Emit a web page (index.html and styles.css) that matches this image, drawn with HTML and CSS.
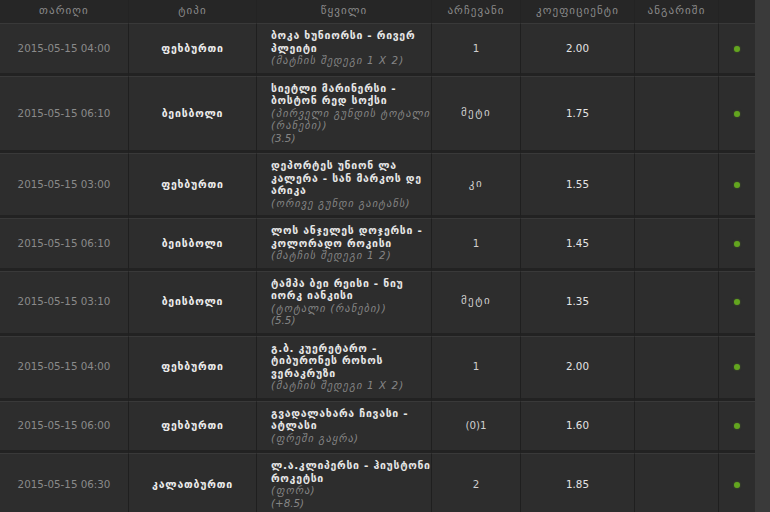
FILE: index.html
```html
<!DOCTYPE html>
<html lang="ka">
<head>
    <meta charset="UTF-8">
    <meta name="viewport" content="width=device-width, initial-scale=1.0">
    <title>ფსონების ისტორია</title>
    <link rel="stylesheet" href="styles.css">
</head>
<body>
    <table class="bets">
        <thead>
            <tr>
                <th class="col-date">თარიღი</th>
                <th class="col-type">ტიპი</th>
                <th class="col-event">წყვილი</th>
                <th class="col-pick">არჩევანი</th>
                <th class="col-odds">კოეფიციენტი</th>
                <th class="col-score">ანგარიში</th>
                <th class="col-status"></th>
            </tr>
        </thead>
        <tbody>
            <tr>
                <td class="date">2015-05-15 04:00</td>
                <td class="type">ფეხბურთი</td>
                <td class="event">
                    <div class="teams">ბოკა ხუნიორსი - რივერ პლეიტი</div>
                    <div class="market">(მატჩის შედეგი 1 X 2)</div>
                </td>
                <td class="pick">1</td>
                <td class="odds">2.00</td>
                <td class="score"></td>
                <td class="status"><span class="dot"></span></td>
            </tr>
            <tr>
                <td class="date">2015-05-15 06:10</td>
                <td class="type">ბეისბოლი</td>
                <td class="event">
                    <div class="teams">სიეტლი მარინერსი - ბოსტონ რედ სოქსი</div>
                    <div class="market">(პირველი გუნდის ტოტალი (რანები))</div>
                    <div class="market line">(3.5)</div>
                </td>
                <td class="pick ka">მეტი</td>
                <td class="odds">1.75</td>
                <td class="score"></td>
                <td class="status"><span class="dot"></span></td>
            </tr>
            <tr>
                <td class="date">2015-05-15 03:00</td>
                <td class="type">ფეხბურთი</td>
                <td class="event">
                    <div class="teams">დეპორტეს უნიონ ლა კალერა - სან მარკოს დე არიკა</div>
                    <div class="market">(ორივე გუნდი გაიტანს)</div>
                </td>
                <td class="pick ka">კი</td>
                <td class="odds">1.55</td>
                <td class="score"></td>
                <td class="status"><span class="dot"></span></td>
            </tr>
            <tr>
                <td class="date">2015-05-15 06:10</td>
                <td class="type">ბეისბოლი</td>
                <td class="event">
                    <div class="teams">ლოს ანჯელეს დოჯერსი - კოლორადო როკისი</div>
                    <div class="market">(მატჩის შედეგი 1 2)</div>
                </td>
                <td class="pick">1</td>
                <td class="odds">1.45</td>
                <td class="score"></td>
                <td class="status"><span class="dot"></span></td>
            </tr>
            <tr>
                <td class="date">2015-05-15 03:10</td>
                <td class="type">ბეისბოლი</td>
                <td class="event">
                    <div class="teams">ტამპა ბეი რეისი - ნიუ იორკ იანკისი</div>
                    <div class="market">(ტოტალი (რანები))</div>
                    <div class="market line">(5.5)</div>
                </td>
                <td class="pick ka">მეტი</td>
                <td class="odds">1.35</td>
                <td class="score"></td>
                <td class="status"><span class="dot"></span></td>
            </tr>
            <tr>
                <td class="date">2015-05-15 04:00</td>
                <td class="type">ფეხბურთი</td>
                <td class="event">
                    <div class="teams">გ.ბ. კუერეტარო - ტიბურონეს როხოს ვერაკრუზი</div>
                    <div class="market">(მატჩის შედეგი 1 X 2)</div>
                </td>
                <td class="pick">1</td>
                <td class="odds">2.00</td>
                <td class="score"></td>
                <td class="status"><span class="dot"></span></td>
            </tr>
            <tr>
                <td class="date">2015-05-15 06:00</td>
                <td class="type">ფეხბურთი</td>
                <td class="event">
                    <div class="teams">გვადალახარა ჩივასი - ატლასი</div>
                    <div class="market">(ფრეში გაყრა)</div>
                </td>
                <td class="pick">(0)1</td>
                <td class="odds">1.60</td>
                <td class="score"></td>
                <td class="status"><span class="dot"></span></td>
            </tr>
            <tr>
                <td class="date">2015-05-15 06:30</td>
                <td class="type">კალათბურთი</td>
                <td class="event">
                    <div class="teams">ლ.ა.კლიპერსი - ჰიუსტონი როკეტსი</div>
                    <div class="market">(ფორა)</div>
                    <div class="market line">(+8.5)</div>
                </td>
                <td class="pick">2</td>
                <td class="odds">1.85</td>
                <td class="score"></td>
                <td class="status"><span class="dot"></span></td>
            </tr>
        </tbody>
    </table>
</body>
</html>
```

FILE: styles.css
```css
body {
    margin: 0;
    background: #3a3a3a;
    font-family: 'DejaVu Sans', 'Noto Sans', sans-serif;
    font-size: 10.3px;
    line-height: 12.5px;
    color: #ddd;
    overflow: hidden;
}
.bets {
    width: 755px;
    border-collapse: separate;
    border-spacing: 0;
    table-layout: fixed;
    background: #2d2d2d;
}
.bets th {
    height: 23px;
    padding: 0;
    background: #262626;
    color: #8a8a8a;
    font-size: 11px;
    font-weight: normal;
    letter-spacing: 1.1px;
    text-align: center;
    border-right: 1px solid #232323;
}
.col-date { width: 128px; }
.col-type { width: 127px; }
.col-event { width: 174px; }
.col-pick { width: 88px; }
.col-odds { width: 113px; }
.col-score { width: 83px; }
.col-status { width: 36px; }
.bets td {
    padding: 5px 0 6px;
    text-align: center;
    vertical-align: middle;
    border-top: 1px solid #393939;
    border-bottom: 3px solid #222;
    border-right: 1px solid #1f1f1f;
}
.bets th:last-child,
.bets td:last-child {
    border-right: none;
}
.date {
    color: #8a8a8a;
}
.type {
    color: #ececec;
    font-size: 10.5px;
    font-weight: bold;
    letter-spacing: 0.8px;
}
.bets td.event {
    text-align: left;
    padding-left: 14px;
    padding-right: 0;
}
.teams {
    color: #e6e6e6;
    font-size: 10.5px;
    font-weight: bold;
    letter-spacing: 0.7px;
}
.market {
    color: #858585;
    font-style: italic;
    letter-spacing: 1.1px;
}
.market.line {
    letter-spacing: 0;
}
.pick {
    color: #cfcfcf;
}
.pick.ka {
    font-size: 11px;
    letter-spacing: 1.5px;
}
.odds {
    color: #e4e4e4;
}
.dot {
    display: inline-block;
    width: 6px;
    height: 6px;
    margin-top: 4px;
    border-radius: 50%;
    background: #63a51f;
    box-shadow: 0 0 2px rgba(99, 165, 31, 0.5);
}
```
